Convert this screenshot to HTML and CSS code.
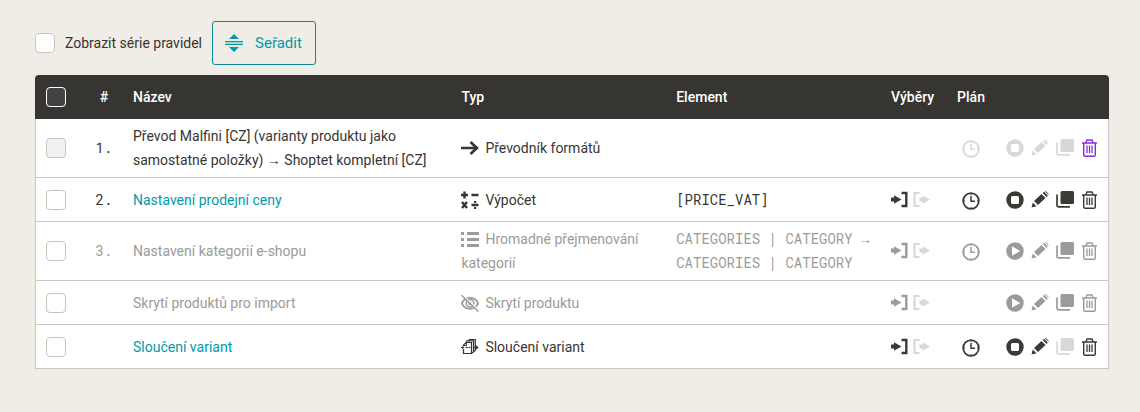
FILE: index.html
```
<!DOCTYPE html>
<html lang="cs">
<head>
    <meta charset="UTF-8">
    <meta name="viewport" content="width=device-width, initial-scale=1.0">
    <title>Pravidla</title>
    <link rel="stylesheet" href="styles.css">
</head>
<body>
    <svg class="sprite" aria-hidden="true">
        <symbol id="sort" viewBox="0 0 18 18">
            <path d="M9 0l5 5H4zM9 18l-5-5h10z"/>
            <path d="M0 7h18v1H0zM0 10h18v1H0z"/>
            <path d="M0 8h18v2H0z" opacity=".3"/>
        </symbol>
        <symbol id="arrow" viewBox="0 0 18 18">
            <path d="M0 9h16M9.500 3l6.500 6-6.500 6" fill="none" stroke="currentColor" stroke-width="2.600"/>
        </symbol>
        <symbol id="calc" viewBox="0 0 18 18">
            <path d="M3.500 .5v7M0 4h7M10.500 4H17.500M10.500 14H17.500M1 11l5 6M6 11l-5 6" fill="none" stroke="currentColor" stroke-width="2.400"/>
            <path d="M13 10h2.200v2H13zM13 16h2.200v2H13z"/>
        </symbol>
        <symbol id="list" viewBox="0 0 18 18">
            <path d="M0 2h3v3H0zM0 8h3v3H0zM0 14h3v3H0zM6 2h12v3H6zM6 8h12v3H6zM6 14h12v3H6z"/>
        </symbol>
        <symbol id="hidden" viewBox="0 0 18 18">
            <path d="M.8 9.300C4 2 14 2 17.200 9.300C14 16.600 4 16.600 .8 9.300z" fill="none" stroke="currentColor" stroke-width="1.800"/>
            <circle cx="9" cy="9.300" r="3.800" fill="none" stroke="currentColor" stroke-width="1.500"/>
            <circle cx="9" cy="9.300" r="1.800"/>
            <path d="M1.500 .8l16.500 16" stroke="#fff" stroke-width="1.400"/>
            <path d="M.5 1.200l17 16.300" stroke="currentColor" stroke-width="1.500"/>
        </symbol>
        <symbol id="merge" viewBox="0 0 18 18">
            <g fill="none" stroke="currentColor">
                <path d="M2.500 8V7L5 4.500h5.500v11h-8V11" stroke-width="1.200"/>
                <path d="M2.500 7.500h3v-3" stroke-width="1"/>
                <path d="M5 3.500l1-.7h6.500V14l-1.500 1M7.500 2.200l1-.7h5.800v11l-1.500 1" stroke-width="1.200"/>
                <path d="M0 9.500h3M4.500 9.500h2M7.500 9.500h2M13 9.500h4" stroke-width="1.200"/>
            </g>
            <path d="M1.300 7.800L3.500 9.500l-2.200 1.700zM5.500 8.500L7 9.500l-1.500 1zM14.700 7l3 2.500-3 2.500z"/>
        </symbol>
        <symbol id="in" viewBox="0 0 18 18">
            <path d="M0 6.500h3V4.200L10.500 8.500 3 12.800v-2.300H0z"/>
            <path d="M10.500 2h4.800v13h-4.800" fill="none" stroke="currentColor" stroke-width="2.400"/>
        </symbol>
        <symbol id="out" viewBox="0 0 18 18">
            <path d="M6.500 6.500h3V4.200L17 8.500 9.500 12.800v-2.300h-3z"/>
            <path d="M6.500 2H1.500v13h5" fill="none" stroke="currentColor" stroke-width="2.200"/>
        </symbol>
        <symbol id="clock" viewBox="0 0 18 18">
            <g fill="none" stroke="currentColor">
                <circle cx="9" cy="9" r="7.800" stroke-width="1.800"/>
                <path d="M9 4v5.200h4" stroke-width="1.500"/>
                <path d="M9 1v2M9 15v2M1 9h2M15 9h2" stroke-width="1"/>
            </g>
        </symbol>
        <symbol id="stop" viewBox="0 0 18 18">
            <path fill-rule="evenodd" d="M9 .3a8.700 8.700 0 1 0 0 17.400A8.700 8.700 0 0 0 9 .3zM6.500 5h5A1.500 1.500 0 0 1 13 6.500v5a1.500 1.500 0 0 1-1.500 1.500h-5A1.500 1.500 0 0 1 5 11.500v-5A1.500 1.500 0 0 1 6.500 5z"/>
        </symbol>
        <symbol id="play" viewBox="0 0 18 18">
            <path fill-rule="evenodd" d="M9 .3a8.700 8.700 0 1 0 0 17.400A8.700 8.700 0 0 0 9 .3zM6 4.300L14.200 9 6 13.700z"/>
        </symbol>
        <symbol id="edit" viewBox="0 0 18 18">
            <path d="M.5 16.500l1.300-5 3.700 3.700zM3 10l7.500-7 4 4-7.500 7zM11.700 2l1.300-1.200 3.800 3.800-1.200 1.300zM14 .5l.6-.5L17.800 2.900l-.6.6z"/>
        </symbol>
        <symbol id="copy" viewBox="0 0 18 18">
            <rect x="4.500" y="0" width="13.500" height="13" rx="1.500"/>
            <path d="M1 3.500v11a1.300 1.300 0 0 0 1.300 1.300H14" fill="none" stroke="currentColor" stroke-width="1.700"/>
        </symbol>
        <symbol id="trash" viewBox="0 0 18 18">
            <g fill="none" stroke="currentColor" stroke-width="1.400">
                <path d="M1 4h15M5 3.500L6 1h5l1 2.500M2.700 4v12a1.200 1.200 0 0 0 1.200 1.200h9.200a1.200 1.200 0 0 0 1.200-1.200V4"/>
                <path d="M6 6.500v7.500M8.500 6.500v7.500M11 6.500v7.500" stroke-width="1.300"/>
            </g>
        </symbol>
    </svg>

    <main class="page">
        <div class="toolbar">
            <label class="toggle"><input type="checkbox" class="check">Zobrazit série pravidel</label>
            <button type="button" class="btn"><svg class="icon"><use href="#sort"/></svg>Seřadit</button>
        </div>

        <table class="rules">
            <thead>
                <tr>
                    <th class="col-check"><input type="checkbox" class="check" aria-label="Vybrat vše"></th>
                    <th class="col-num">#</th>
                    <th>Název</th>
                    <th class="col-type">Typ</th>
                    <th class="col-element">Element</th>
                    <th class="col-select">Výběry</th>
                    <th class="col-plan">Plán</th>
                    <th class="col-actions"></th>
                </tr>
            </thead>
            <tbody>
                <tr>
                    <td><input type="checkbox" class="check" aria-label="Vybrat 1" disabled></td>
                    <td class="col-num mono">1.</td>
                    <td>Převod Malfini [CZ] (varianty produktu jako samostatné položky) → Shoptet kompletní [CZ]</td>
                    <td><svg class="icon type-icon"><use href="#arrow"/></svg>Převodník formátů</td>
                    <td></td>
                    <td></td>
                    <td class="col-plan"><button type="button" class="icon-btn" aria-label="Plán" disabled><svg class="icon"><use href="#clock"/></svg></button></td>
                    <td class="col-actions">
                        <div class="actions">
                            <button type="button" class="icon-btn" aria-label="Zastavit" disabled><svg class="icon"><use href="#stop"/></svg></button>
                            <button type="button" class="icon-btn" aria-label="Upravit" disabled><svg class="icon"><use href="#edit"/></svg></button>
                            <button type="button" class="icon-btn" aria-label="Kopírovat" disabled><svg class="icon"><use href="#copy"/></svg></button>
                            <button type="button" class="icon-btn highlight" aria-label="Smazat"><svg class="icon"><use href="#trash"/></svg></button>
                        </div>
                    </td>
                </tr>
                <tr>
                    <td><input type="checkbox" class="check" aria-label="Vybrat 2"></td>
                    <td class="col-num mono">2.</td>
                    <td><a href="#">Nastavení prodejní ceny</a></td>
                    <td><svg class="icon type-icon"><use href="#calc"/></svg>Výpočet</td>
                    <td class="mono">[PRICE_VAT]</td>
                    <td>
                        <div class="selections">
                            <button type="button" class="icon-btn" aria-label="Vstupní výběr"><svg class="icon"><use href="#in"/></svg></button>
                            <button type="button" class="icon-btn" aria-label="Výstupní výběr" disabled><svg class="icon"><use href="#out"/></svg></button>
                        </div>
                    </td>
                    <td class="col-plan"><button type="button" class="icon-btn" aria-label="Plán"><svg class="icon"><use href="#clock"/></svg></button></td>
                    <td class="col-actions">
                        <div class="actions">
                            <button type="button" class="icon-btn" aria-label="Zastavit"><svg class="icon"><use href="#stop"/></svg></button>
                            <button type="button" class="icon-btn" aria-label="Upravit"><svg class="icon"><use href="#edit"/></svg></button>
                            <button type="button" class="icon-btn" aria-label="Kopírovat"><svg class="icon"><use href="#copy"/></svg></button>
                            <button type="button" class="icon-btn" aria-label="Smazat"><svg class="icon"><use href="#trash"/></svg></button>
                        </div>
                    </td>
                </tr>
                <tr class="inactive">
                    <td><input type="checkbox" class="check" aria-label="Vybrat 3"></td>
                    <td class="col-num mono">3.</td>
                    <td><a href="#">Nastavení kategorií e-shopu</a></td>
                    <td><svg class="icon type-icon"><use href="#list"/></svg>Hromadné přejmenování kategorií</td>
                    <td class="mono">CATEGORIES | CATEGORY → CATEGORIES | CATEGORY</td>
                    <td>
                        <div class="selections">
                            <button type="button" class="icon-btn" aria-label="Vstupní výběr"><svg class="icon"><use href="#in"/></svg></button>
                            <button type="button" class="icon-btn" aria-label="Výstupní výběr" disabled><svg class="icon"><use href="#out"/></svg></button>
                        </div>
                    </td>
                    <td class="col-plan"><button type="button" class="icon-btn" aria-label="Plán"><svg class="icon"><use href="#clock"/></svg></button></td>
                    <td class="col-actions">
                        <div class="actions">
                            <button type="button" class="icon-btn" aria-label="Spustit"><svg class="icon"><use href="#play"/></svg></button>
                            <button type="button" class="icon-btn" aria-label="Upravit"><svg class="icon"><use href="#edit"/></svg></button>
                            <button type="button" class="icon-btn" aria-label="Kopírovat"><svg class="icon"><use href="#copy"/></svg></button>
                            <button type="button" class="icon-btn" aria-label="Smazat"><svg class="icon"><use href="#trash"/></svg></button>
                        </div>
                    </td>
                </tr>
                <tr class="inactive">
                    <td><input type="checkbox" class="check" aria-label="Vybrat skrytí produktů"></td>
                    <td></td>
                    <td><a href="#">Skrytí produktů pro import</a></td>
                    <td><svg class="icon type-icon"><use href="#hidden"/></svg>Skrytí produktu</td>
                    <td></td>
                    <td>
                        <div class="selections">
                            <button type="button" class="icon-btn" aria-label="Vstupní výběr"><svg class="icon"><use href="#in"/></svg></button>
                            <button type="button" class="icon-btn" aria-label="Výstupní výběr" disabled><svg class="icon"><use href="#out"/></svg></button>
                        </div>
                    </td>
                    <td></td>
                    <td class="col-actions">
                        <div class="actions">
                            <button type="button" class="icon-btn" aria-label="Spustit"><svg class="icon"><use href="#play"/></svg></button>
                            <button type="button" class="icon-btn" aria-label="Upravit"><svg class="icon"><use href="#edit"/></svg></button>
                            <button type="button" class="icon-btn" aria-label="Kopírovat"><svg class="icon"><use href="#copy"/></svg></button>
                            <button type="button" class="icon-btn" aria-label="Smazat"><svg class="icon"><use href="#trash"/></svg></button>
                        </div>
                    </td>
                </tr>
                <tr>
                    <td><input type="checkbox" class="check" aria-label="Vybrat sloučení variant"></td>
                    <td></td>
                    <td><a href="#">Sloučení variant</a></td>
                    <td><svg class="icon type-icon"><use href="#merge"/></svg>Sloučení variant</td>
                    <td></td>
                    <td>
                        <div class="selections">
                            <button type="button" class="icon-btn" aria-label="Vstupní výběr"><svg class="icon"><use href="#in"/></svg></button>
                            <button type="button" class="icon-btn" aria-label="Výstupní výběr" disabled><svg class="icon"><use href="#out"/></svg></button>
                        </div>
                    </td>
                    <td class="col-plan"><button type="button" class="icon-btn" aria-label="Plán"><svg class="icon"><use href="#clock"/></svg></button></td>
                    <td class="col-actions">
                        <div class="actions">
                            <button type="button" class="icon-btn" aria-label="Zastavit"><svg class="icon"><use href="#stop"/></svg></button>
                            <button type="button" class="icon-btn" aria-label="Upravit"><svg class="icon"><use href="#edit"/></svg></button>
                            <button type="button" class="icon-btn" aria-label="Kopírovat" disabled><svg class="icon"><use href="#copy"/></svg></button>
                            <button type="button" class="icon-btn" aria-label="Smazat"><svg class="icon"><use href="#trash"/></svg></button>
                        </div>
                    </td>
                </tr>
            </tbody>
        </table>
    </main>
</body>
</html>
```
FILE: styles.css
```
* {
    box-sizing: border-box;
}
body {
    margin: 0;
    background-color: #f0ede6;
    color: #373532;
    font-family: Roboto, Arial, sans-serif;
    font-size: 14px;
    line-height: 24px;
}
.sprite {
    display: none;
}
.page {
    padding: 21px 31px 43px 35px;
}
.icon {
    width: 18px;
    height: 18px;
    fill: currentColor;
}

/* toolbar */
.toolbar {
    display: flex;
    align-items: center;
    gap: 10px;
    margin-bottom: 10px;
}
.toggle {
    display: flex;
    align-items: center;
    gap: 10px;
}
.check {
    appearance: none;
    display: block;
    width: 20px;
    height: 20px;
    margin: 0;
    border: 1px solid #c9c4c1;
    border-radius: 4px;
    background-color: #fff;
}
.check:checked {
    background-color: #009ba9;
}
.check:disabled {
    background-color: #f2f1f0;
}
.btn {
    display: flex;
    align-items: center;
    gap: 12px;
    height: 44px;
    padding: 0 13px 0 12px;
    border: 1px solid #0b8593;
    border-radius: 3px;
    background: none;
    color: #009ba9;
    font-family: inherit;
    font-size: 15px;
    cursor: pointer;
}

/* rules table */
.rules {
    width: 100%;
    table-layout: fixed;
    border-collapse: separate;
    border-spacing: 0;
}
.rules th,
.rules td {
    height: 44px;
    padding: 5px 10px;
    text-align: left;
    vertical-align: middle;
}
.rules th {
    background-color: #373532;
    color: #fff;
    font-weight: 500;
}
.rules th:first-child { border-top-left-radius: 4px; }
.rules th:last-child { border-top-right-radius: 4px; }
.rules th .check {
    border-color: #fff;
    background-color: #434142;
}
.rules td {
    background-color: #fff;
    border-bottom: 1px solid #c9c6c3;
}
.rules td:first-child { border-left: 1px solid #c9c6c3; }
.rules td:last-child { border-right: 1px solid #c9c6c3; }
.rules th:first-child { padding-left: 11px; }
.rules a {
    color: #009ba9;
    text-decoration: none;
}
.rules .col-check { width: 50px; }
.rules .col-num { width: 38px; text-align: center; }
.rules .col-type,
.rules .col-element { width: 20%; }
.rules .col-select { width: 65px; }
.rules .col-plan { width: 50px; text-align: center; }
.rules .col-actions { width: 113px; padding-right: 9px; }
.mono {
    font-family: "Roboto Mono", "Liberation Mono", monospace;
}
.type-icon {
    margin-right: 6px;
    vertical-align: -4px;
}
.selections {
    display: flex;
    gap: 4px;
}
.actions {
    display: flex;
    justify-content: flex-end;
    gap: 7px;
}
.icon-btn {
    padding: 0;
    border: 0;
    background: none;
    color: #3b3a36;
    line-height: 0;
    vertical-align: middle;
    cursor: pointer;
}
.highlight { color: #8a2be2; }
.inactive,
.inactive a,
.inactive .icon-btn { color: #9b9b99; }
.icon-btn:disabled,
.inactive .icon-btn:disabled {
    color: #d8d8d7;
    cursor: default;
}
```
